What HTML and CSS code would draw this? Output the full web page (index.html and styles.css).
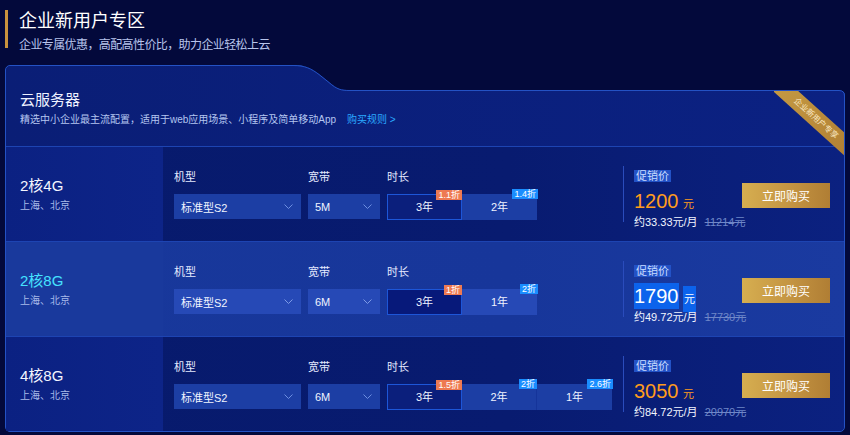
FILE: index.html
```html
<!DOCTYPE html>
<html lang="zh-CN">
<head>
    <meta charset="UTF-8">
    <title>企业新用户专区</title>
    <link rel="stylesheet" href="styles.css">
</head>
<body>
    <header class="zone-head">
        <h1>企业新用户专区</h1>
        <p>企业专属优惠，高配高性价比，助力企业轻松上云</p>
    </header>

    <section class="card">
        <svg class="notch" width="840" height="34" viewBox="0 0 840 34">
            <path d="M288 0 C300 0 306 3 314 9 L324 17 C332 24 336 25 345 25 L834 25 Q840 25 840 31 L840 0 Z" fill="#03093b"/>
            <path d="M288 0.5 C300 0.5 306 3.5 314 9.5 L324 17.5 C332 24.5 336 25.5 345 25.5 L834 25.5 Q839.5 25.5 839.5 31 L839.5 34" fill="none" stroke="#2452c4" stroke-width="1"/>
        </svg>

        <div class="card-head">
            <h2>云服务器</h2>
            <p>精选中小企业最主流配置，适用于web应用场景、小程序及简单移动App <a href="#">购买规则 &gt;</a></p>
            <div class="corner"><div class="ribbon">企业新用户专享</div></div>
        </div>

        <!-- 2核4G -->
        <div class="row">
            <div class="spec">
                <div class="spec-name">2核4G</div>
                <div class="spec-loc">上海、北京</div>
            </div>
            <div class="opts">
                <div class="group">
                    <label>机型</label>
                    <div class="select wide">标准型S2<svg width="9" height="5" viewBox="0 0 9 5"><polyline points="0.5,0.5 4.5,4.5 8.5,0.5" fill="none" stroke="#6d8ee0"/></svg></div>
                </div>
                <div class="group">
                    <label>宽带</label>
                    <div class="select narrow">5M<svg width="9" height="5" viewBox="0 0 9 5"><polyline points="0.5,0.5 4.5,4.5 8.5,0.5" fill="none" stroke="#6d8ee0"/></svg></div>
                </div>
                <div class="group">
                    <label>时长</label>
                    <div class="tabs">
                        <div class="tab active">3年<span class="badge hot">1.1折</span></div>
                        <div class="tab">2年<span class="badge">1.4折</span></div>
                    </div>
                </div>
            </div>
            <div class="price">
                <div class="price-info">
                    <span class="tag">促销价</span>
                    <div class="amount"><span class="num">1200</span> <span class="unit">元</span></div>
                    <div class="monthly">约33.33元/月 <s>11214元</s></div>
                </div>
                <button class="buy">立即购买</button>
            </div>
        </div>

        <!-- 2核8G -->
        <div class="row current">
            <div class="spec">
                <div class="spec-name">2核8G</div>
                <div class="spec-loc">上海、北京</div>
            </div>
            <div class="opts">
                <div class="group">
                    <label>机型</label>
                    <div class="select wide">标准型S2<svg width="9" height="5" viewBox="0 0 9 5"><polyline points="0.5,0.5 4.5,4.5 8.5,0.5" fill="none" stroke="#7d9ae6"/></svg></div>
                </div>
                <div class="group">
                    <label>宽带</label>
                    <div class="select narrow">6M<svg width="9" height="5" viewBox="0 0 9 5"><polyline points="0.5,0.5 4.5,4.5 8.5,0.5" fill="none" stroke="#7d9ae6"/></svg></div>
                </div>
                <div class="group">
                    <label>时长</label>
                    <div class="tabs">
                        <div class="tab active">3年<span class="badge hot">1折</span></div>
                        <div class="tab">1年<span class="badge">2折</span></div>
                    </div>
                </div>
            </div>
            <div class="price">
                <div class="price-info">
                    <span class="tag">促销价</span>
                    <div class="amount"><span class="num">1790</span> <span class="unit">元</span></div>
                    <div class="monthly">约49.72元/月 <s>17730元</s></div>
                </div>
                <button class="buy">立即购买</button>
            </div>
        </div>

        <!-- 4核8G -->
        <div class="row">
            <div class="spec">
                <div class="spec-name">4核8G</div>
                <div class="spec-loc">上海、北京</div>
            </div>
            <div class="opts">
                <div class="group">
                    <label>机型</label>
                    <div class="select wide">标准型S2<svg width="9" height="5" viewBox="0 0 9 5"><polyline points="0.5,0.5 4.5,4.5 8.5,0.5" fill="none" stroke="#6d8ee0"/></svg></div>
                </div>
                <div class="group">
                    <label>宽带</label>
                    <div class="select narrow">6M<svg width="9" height="5" viewBox="0 0 9 5"><polyline points="0.5,0.5 4.5,4.5 8.5,0.5" fill="none" stroke="#6d8ee0"/></svg></div>
                </div>
                <div class="group">
                    <label>时长</label>
                    <div class="tabs">
                        <div class="tab active">3年<span class="badge hot">1.5折</span></div>
                        <div class="tab">2年<span class="badge">2折</span></div>
                        <div class="tab">1年<span class="badge">2.6折</span></div>
                    </div>
                </div>
            </div>
            <div class="price">
                <div class="price-info">
                    <span class="tag">促销价</span>
                    <div class="amount"><span class="num">3050</span> <span class="unit">元</span></div>
                    <div class="monthly">约84.72元/月 <s>20970元</s></div>
                </div>
                <button class="buy">立即购买</button>
            </div>
        </div>
    </section>
</body>
</html>
```

FILE: styles.css
```css
* {
    margin: 0;
    padding: 0;
    box-sizing: border-box;
}

body {
    font-family: "Liberation Sans", "Noto Sans CJK SC", sans-serif;
    background: #03093b;
    color: #fff;
    width: 850px;
    height: 435px;
    overflow: hidden;
}

/* 顶部标题 */
.zone-head {
    margin: 12px 0 17px 5px;
    height: 38px;
    border-left: 3px solid #c8923e;
    padding-left: 11px;
}

.zone-head h1 {
    font-size: 18px;
    line-height: 22px;
    font-weight: normal;
    margin-top: -2px;
}

.zone-head p {
    font-size: 12px;
    line-height: 16px;
    margin-top: 5px;
    letter-spacing: -0.6px;
    color: #b8c4ec;
    white-space: nowrap;
}

/* 卡片 */
.card {
    position: relative;
    margin-left: 5px;
    width: 840px;
    border: 1px solid #2452c4;
    border-radius: 5px;
    background: #0a1f78;
}

.notch {
    position: absolute;
    top: -1px;
    left: -1px;
    display: block;
    z-index: 2;
}

.card-head {
    position: relative;
    height: 80px;
    padding: 24px 0 0 14px;
    background: linear-gradient(90deg, #0a1e76 0%, #0b2182 100%);
    border-radius: 5px 5px 0 0;
}

.card-head h2 {
    font-size: 15px;
    line-height: 20px;
    font-weight: normal;
    color: #eef2ff;
}

.card-head p {
    margin-top: 2px;
    font-size: 10px;
    line-height: 16px;
    color: #b4c6f0;
    white-space: nowrap;
}

.card-head a {
    color: #2aaaff;
    text-decoration: none;
    margin-left: 8px;
}

.corner {
    position: absolute;
    top: 25px;
    right: 0;
    width: 70px;
    height: 70px;
    overflow: hidden;
    z-index: 3;
}

.ribbon {
    position: absolute;
    left: -13px;
    top: 19px;
    width: 110px;
    height: 17px;
    line-height: 17px;
    text-align: center;
    font-size: 8px;
    color: #fbe9c4;
    background: linear-gradient(90deg, #c59a44, #b07e32);
    transform: rotate(42deg);
}

/* 行 */
.row {
    display: flex;
    height: 95px;
    border-top: 1px solid #1d44b2;
    background: linear-gradient(90deg, #071a6c 0%, #081b70 60%, #0b2180 100%);
}

.row:last-child {
    border-radius: 0 0 5px 5px;
}

.row.current {
    background: linear-gradient(90deg, #18389b 0%, #17369a 60%, #1a3aa0 100%);
}

.spec {
    width: 157px;
    padding-left: 14px;
    display: flex;
    flex-direction: column;
    justify-content: center;
    background: linear-gradient(90deg, #0b2182, #0d2488);
}

.row.current .spec {
    background: #19399c;
}

.spec-name {
    font-size: 15px;
    line-height: 20px;
    color: #f4f6ff;
}

.row.current .spec-name {
    color: #45e2ff;
}

.spec-loc {
    margin-top: 3px;
    font-size: 10px;
    line-height: 14px;
    color: #a9bbea;
}

.opts {
    width: 460px;
    display: flex;
    gap: 7px;
    padding: 23px 0 0 11px;
}

.group label {
    display: block;
    font-size: 11px;
    line-height: 14px;
    color: #e4eaff;
    margin-bottom: 10px;
}

.select {
    height: 25px;
    display: flex;
    align-items: center;
    justify-content: space-between;
    padding: 0 8px 0 7px;
    font-size: 11px;
    color: #f0f4ff;
    background: #1c3ea4;
}

.row.current .select {
    background: #2649b6;
}

.select.wide {
    width: 127px;
}

.select.narrow {
    width: 72px;
}

.tabs {
    display: flex;
}

.tab {
    position: relative;
    width: 75px;
    height: 26px;
    line-height: 26px;
    text-align: center;
    font-size: 11px;
    color: #eef2ff;
    background: #1c3ea4;
    border-right: 1px solid #15349a;
}

.tab:last-child {
    border-right: none;
}

.row.current .tab {
    background: #2649b6;
}

.tab.active,
.row.current .tab.active {
    background: #0b1f7c;
    border: 1px solid #1d56d8;
    line-height: 24px;
}

.row.current .tab.active {
    background: #07197a;
}

.badge {
    position: absolute;
    top: -5px;
    right: -1px;
    height: 10px;
    line-height: 10px;
    padding: 0 2px;
    font-size: 9px;
    color: #fff;
    background: #1a8dff;
}

.badge.hot {
    background: #ee7a52;
}

/* 价格 */
.price {
    flex: 1;
    display: flex;
    align-items: flex-start;
    margin: 19px 0;
    border-left: 1px solid #2a4cbc;
    padding-left: 10px;
}

.price-info {
    width: 108px;
}

.tag {
    display: inline-block;
    height: 12px;
    line-height: 12px;
    padding: 0 2px;
    font-size: 11px;
    color: #c9dcff;
    background: #2352c6;
}

.amount {
    margin-top: 4px;
    height: 26px;
    line-height: 26px;
    color: #ff9c1c;
    white-space: nowrap;
}

.amount .num {
    font-size: 20px;
}

.amount .unit {
    font-size: 11px;
}

.row.current .amount {
    color: #fff;
}

.row.current .amount .num,
.row.current .amount .unit {
    display: inline-block;
    background: #0c63ec;
}

.row.current .amount .unit {
    padding: 0 1px;
}

.monthly {
    margin-top: 1px;
    font-size: 11px;
    line-height: 14px;
    color: #f2f5ff;
    white-space: nowrap;
}

.monthly s {
    margin-left: 4px;
    color: #6f87c8;
}

.buy {
    margin-top: 17px;
    width: 88px;
    height: 25px;
    border: none;
    font-family: inherit;
    font-size: 12px;
    color: #fff;
    background: linear-gradient(90deg, #d6ae50 0%, #c49442 55%, #b07e34 100%);
    cursor: pointer;
}
```
